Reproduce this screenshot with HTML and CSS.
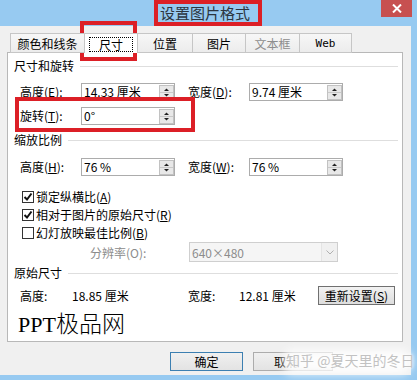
FILE: index.html
```html
<!DOCTYPE html>
<html>
<head>
<meta charset="utf-8">
<link rel="stylesheet" href="styles.css">
</head>
<body>
<div class="window">
  <div class="titlebar">
    <span class="title">设置图片格式</span>
    <div class="close">
      <svg width="10" height="9" viewBox="0 0 10 9"><path d="M1 0.5 L9 8.5 M9 0.5 L1 8.5" stroke="#fff" stroke-width="2"/></svg>
    </div>
  </div>
  <div class="frame">
    <div class="dialog">
      <div class="tabs">
        <div class="tab t1">颜色和线条</div>
        <div class="tab t2 active"><span class="focus">尺寸</span></div>
        <div class="tab t3">位置</div>
        <div class="tab t4">图片</div>
        <div class="tab t5 disabled">文本框</div>
        <div class="tab t6 web">Web</div>
      </div>
      <div class="panel">
        <div class="sec">尺寸和旋转</div>
        <div class="row r1">
          <span class="lbl">高度(<u>E</u>):</span>
          <div class="input"><span>14.33 厘米</span><span class="spin"><svg width="15" height="15" viewBox="0 0 15 15"><rect x="0.5" y="0.5" width="14" height="14" fill="#e8e8e8" stroke="#c2c2c2"/><line x1="1" y1="7.5" x2="14" y2="7.5" stroke="#c9c9c9"/><path d="M5 6 L10 6 L7.5 3.5 Z" fill="#222"/><path d="M5 9 L10 9 L7.5 11.5 Z" fill="#222"/></svg></span></div>
          <span class="lbl lbl2">宽度(<u>D</u>):</span>
          <div class="input"><span>9.74 厘米</span><span class="spin"><svg width="15" height="15" viewBox="0 0 15 15"><rect x="0.5" y="0.5" width="14" height="14" fill="#e8e8e8" stroke="#c2c2c2"/><line x1="1" y1="7.5" x2="14" y2="7.5" stroke="#c9c9c9"/><path d="M5 6 L10 6 L7.5 3.5 Z" fill="#222"/><path d="M5 9 L10 9 L7.5 11.5 Z" fill="#222"/></svg></span></div>
        </div>
        <div class="row r2">
          <span class="lbl">旋转(<u>T</u>):</span>
          <div class="input"><span>0°</span><span class="spin"><svg width="15" height="15" viewBox="0 0 15 15"><rect x="0.5" y="0.5" width="14" height="14" fill="#e8e8e8" stroke="#c2c2c2"/><line x1="1" y1="7.5" x2="14" y2="7.5" stroke="#c9c9c9"/><path d="M5 6 L10 6 L7.5 3.5 Z" fill="#222"/><path d="M5 9 L10 9 L7.5 11.5 Z" fill="#222"/></svg></span></div>
        </div>
        <div class="sec s2">缩放比例</div>
        <div class="row r3">
          <span class="lbl">高度(<u>H</u>):</span>
          <div class="input"><span>76 %</span><span class="spin"><svg width="15" height="15" viewBox="0 0 15 15"><rect x="0.5" y="0.5" width="14" height="14" fill="#e8e8e8" stroke="#c2c2c2"/><line x1="1" y1="7.5" x2="14" y2="7.5" stroke="#c9c9c9"/><path d="M5 6 L10 6 L7.5 3.5 Z" fill="#222"/><path d="M5 9 L10 9 L7.5 11.5 Z" fill="#222"/></svg></span></div>
          <span class="lbl lbl2">宽度(<u>W</u>):</span>
          <div class="input"><span>76 %</span><span class="spin"><svg width="15" height="15" viewBox="0 0 15 15"><rect x="0.5" y="0.5" width="14" height="14" fill="#e8e8e8" stroke="#c2c2c2"/><line x1="1" y1="7.5" x2="14" y2="7.5" stroke="#c9c9c9"/><path d="M5 6 L10 6 L7.5 3.5 Z" fill="#222"/><path d="M5 9 L10 9 L7.5 11.5 Z" fill="#222"/></svg></span></div>
        </div>
        <div class="cbs">
          <div class="cb"><span class="box"><svg width="10" height="10" viewBox="0 0 10 10"><path d="M1.5 5 L4 7.5 L8.5 1.5" fill="none" stroke="#111" stroke-width="2"/></svg></span><span>锁定纵横比(<u>A</u>)</span></div>
          <div class="cb"><span class="box"><svg width="10" height="10" viewBox="0 0 10 10"><path d="M1.5 5 L4 7.5 L8.5 1.5" fill="none" stroke="#111" stroke-width="2"/></svg></span><span>相对于图片的原始尺寸(<u>R</u>)</span></div>
          <div class="cb"><span class="box"></span><span>幻灯放映最佳比例(<u>B</u>)</span></div>
        </div>
        <div class="res">
          <span class="res-lbl">分辨率(O):</span>
          <div class="select"><span>640×480</span><span class="arrow"><svg width="8" height="5" viewBox="0 0 8 5"><path d="M0.5 0.5 L4 4 L7.5 0.5" fill="none" stroke="#b0b0b0"/></svg></span></div>
        </div>
        <div class="sec s3">原始尺寸</div>
        <div class="orig">
          <span class="o-l">高度:</span>
          <span class="o-v">18.85 厘米</span>
          <span class="o-l2">宽度:</span>
          <span class="o-v2">12.81 厘米</span>
          <div class="btn">重新设置(<u>S</u>)</div>
        </div>
        <div class="ppt">PPT<span class="cjk">极品网</span></div>
      </div>
      <div class="buttons">
        <div class="b default">确定</div>
        <div class="b cancel">取消</div>
      </div>
    </div>
    <div class="edge"></div>
  </div>
  <div class="bottom-edge"></div>

  <div class="mark mark-title"></div>
  <div class="mark mark-tab"></div>
  <div class="mark mark-rot"></div>
  <div class="glow"></div>
  <div class="watermark">知乎 @夏天里的冬日</div>
</div>
</body>
</html>
```

FILE: styles.css
```css
* { box-sizing: border-box; margin: 0; padding: 0; }
body {
  width: 417px; height: 380px; overflow: hidden;
  font-family: "Noto Sans CJK SC", "Noto Sans", sans-serif;
  font-size: 12px; color: #000; background: #f0f0f0;
}
u { text-decoration: underline; text-underline-offset: 1px; }
.window {
  position: relative; width: 417px; height: 380px;
  display: flex; flex-direction: column; background: #f0f0f0;
}
.titlebar {
  height: 26px; background: #97caf1;
  display: flex; align-items: center; justify-content: center;
  padding-right: 7px; position: relative;
}
.title { font-size: 15px; line-height: 20px; color: #2b3540; }
.close {
  position: absolute; right: 5px; top: 0; width: 31px; height: 17px;
  background: #c75050; display: flex; align-items: center; justify-content: center;
}
.frame { flex: 1; display: flex; }
.dialog { flex: 1; padding: 7px 0 0 7px; display: flex; flex-direction: column; }
.edge { width: 6px; background: #97caf1; }
.bottom-edge { height: 5px; background: #97caf1; }

/* tabs */
.tabs { display: flex; margin-left: 3px; height: 20px; position: relative; z-index: 1; }
.tab {
  height: 20px; border: 1px solid #c6c6c6; margin-right: -1px;
  background: linear-gradient(#f7f7f7, #ececec);
  display: flex; align-items: center; justify-content: center;
  line-height: 16px; padding-top: 1px;
}
.t1 { width: 75px; }
.t2 { width: 54px; }
.t3 { width: 56px; }
.t4 { width: 54px; }
.t5 { width: 55px; }
.t6 { width: 53px; }
.tab.active { background: #fff; border-bottom: none; position: relative; z-index: 2; }
.focus { border: 1px dotted #000; padding: 0 9px; line-height: 13px; height: 15px; }
.tab.disabled { color: #8d8d8d; }
.tab.web { font-family: "DejaVu Sans Mono", monospace; font-size: 11px; }

/* panel */
.panel {
  margin-top: -1px; width: 396px; height: 290px; background: #fff;
  border: 1px solid #b8b8b8; padding: 5px 4px 0 6px;
  display: flex; flex-direction: column;
}
.sec { display: flex; align-items: center; height: 16px; line-height: 16px; }
.sec::after { content: ""; flex: 1; border-top: 1px solid #dedede; margin-left: 6px; margin-top: 1px; }
.s2 { margin-top: 7px; }
.s3 { margin-top: 3px; }

.row { display: flex; align-items: center; height: 18px; padding-left: 6px; }
.r1 { margin-top: 9px; }
.r2 { margin-top: 6px; }
.r3 { margin-top: 10px; }
.lbl { width: 61px; line-height: 16px; }
.lbl2 { margin-left: 13px; }
.input {
  width: 94px; height: 18px; border: 1px solid #acacac; background: #fff;
  display: flex; align-items: center; justify-content: space-between;
  padding-left: 2px; padding-right: 0; line-height: 16px;
}
.spin { display: flex; width: 15px; height: 15px; margin-right: 0; }

.cbs { margin-top: 12px; display: flex; flex-direction: column; }
.cb { display: flex; align-items: center; height: 18px; padding-left: 8px; line-height: 16px; }
.box {
  width: 12px; height: 12px; border: 1px solid #333; background: #fff;
  margin-right: 2px; display: flex; align-items: center; justify-content: center;
}

.res { display: flex; align-items: center; height: 20px; padding-left: 76px; }
.res-lbl { width: 99px; color: #8c8c8c; }
.select {
  width: 149px; height: 20px; border: 1px solid #cfcfcf; background: #f5f5f5;
  color: #8c8c8c; display: flex; align-items: center; justify-content: space-between;
  padding-left: 2px;
}
.arrow {
  width: 16px; height: 18px; display: flex; align-items: center; justify-content: center;
  border-left: 1px solid #e4e4e4; background: #f0f0f0;
}

.orig { display: flex; align-items: center; height: 19px; margin-top: 5px; padding-left: 6px; }
.o-l { width: 52px; }
.o-v { width: 116px; }
.o-l2 { width: 51px; }
.o-v2 { width: 79px; }
.btn {
  width: 77px; height: 19px; border: 1px solid #707070;
  background: linear-gradient(#f2f2f2, #dddddd);
  display: flex; align-items: center; justify-content: center; line-height: 16px;
}

.ppt {
  margin-top: 4px; padding-left: 4px; height: 26px; line-height: 26px;
  font-family: "Liberation Serif", serif; font-size: 22px; color: #000;
}
.ppt .cjk { font-family: "Noto Sans CJK SC", sans-serif; font-size: 23px; font-weight: 300; }

/* buttons */
.buttons { display: flex; gap: 10px; margin-top: 10px; padding-left: 163px; }
.b {
  width: 73px; height: 19px; border: 1px solid #acacac;
  background: linear-gradient(#f0f0f0, #e3e3e3);
  display: flex; align-items: center; justify-content: center; line-height: 16px;
}
.b.default { border-color: #3c7fb1; }
.b.cancel { justify-content: flex-start; padding-left: 20px; width: 80px; }

/* annotations */
.mark { position: absolute; border: 4px solid #dc1f26; }
.mark-title { left: 154px; top: 0; width: 108px; height: 26px; }
.mark-tab { left: 80px; top: 21px; width: 57px; height: 40px; }
.mark-rot { left: 15px; top: 97px; width: 180px; height: 35px; }

.glow {
  position: absolute; left: 284px; top: 350px; width: 126px; height: 24px;
  background: rgba(255,255,255,0.9); filter: blur(5px); border-radius: 8px;
}
.watermark {
  position: absolute; left: 286px; top: 351px; font-size: 14px; line-height: 18px;
  color: #c2c2c2; white-space: nowrap;
  text-shadow: 0 0 3px #fff, 0 0 6px #fff;
}
```
